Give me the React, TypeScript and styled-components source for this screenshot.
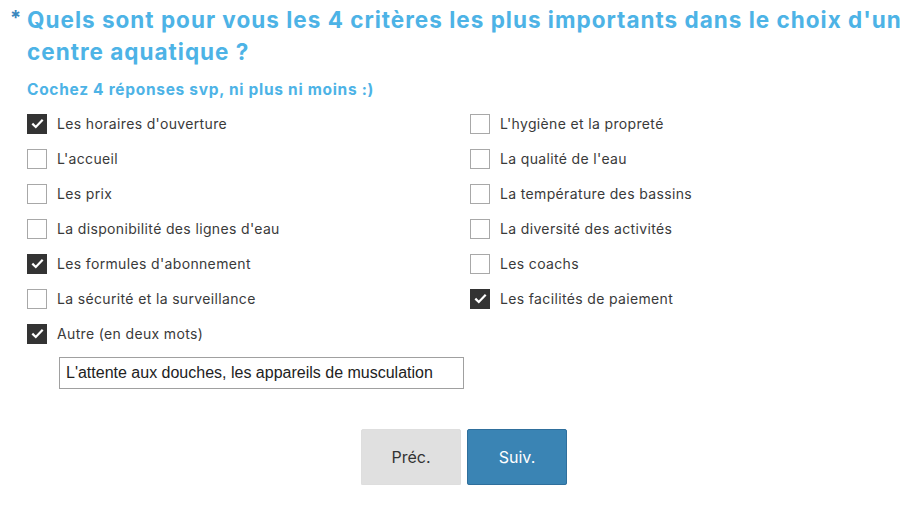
import React from "react";
import styled, { createGlobalStyle } from "styled-components";

const GlobalStyle = createGlobalStyle`
  body {
    margin: 0;
    background: #ffffff;
    font-family: "Inter", "Open Sans", sans-serif;
  }
`;

const left = [
  { label: "Les horaires d'ouverture", checked: true },
  { label: "L'accueil", checked: false },
  { label: "Les prix", checked: false },
  { label: "La disponibilité des lignes d'eau", checked: false },
  { label: "Les formules d'abonnement", checked: true },
  { label: "La sécurité et la surveillance", checked: false },
  { label: "Autre (en deux mots)", checked: true },
];

const right = [
  { label: "L'hygiène et la propreté", checked: false },
  { label: "La qualité de l'eau", checked: false },
  { label: "La température des bassins", checked: false },
  { label: "La diversité des activités", checked: false },
  { label: "Les coachs", checked: false },
  { label: "Les facilités de paiement", checked: true },
];

const App: React.FC = () => {
  return (
    <>
      <GlobalStyle />
      <Page>
        <TitleRow>
          <Star>*</Star>
          <Title>Quels sont pour vous les 4 critères les plus importants dans le choix d'un centre aquatique ?</Title>
        </TitleRow>
        <Hint>Cochez 4 réponses svp, ni plus ni moins :)</Hint>
        <Options>
          {[...left, ...right].map((o) => (
            <Option key={o.label}>
              <Box checked={o.checked}>
                {o.checked && (
                  <svg width="13" height="11" viewBox="0 0 13 11">
                    <path d="M1.3 5.6 L4.8 9 L11.7 1.8" fill="none" stroke="#fff" strokeWidth="2.2" />
                  </svg>
                )}
              </Box>
              <Label>{o.label}</Label>
            </Option>
          ))}
        </Options>
        <OtherInput defaultValue="L'attente aux douches, les appareils de musculation" />
        <Nav>
          <NavButton>Préc.</NavButton>
          <NavButton primary>Suiv.</NavButton>
        </Nav>
      </Page>
    </>
  );
};

const Page = styled.div`
  padding: 4px 0 0 10px;
`;

const TitleRow = styled.div`
  display: flex;
  align-items: flex-start;
`;

const Star = styled.span`
  width: 17px;
  color: #3b87bd;
  font-size: 20px;
  font-weight: 700;
  line-height: 28px;
`;

const Title = styled.h2`
  margin: 0;
  width: 890px;
  color: #4db3e6;
  font-size: 22.5px;
  font-weight: 700;
  line-height: 32px;
  letter-spacing: 1px;
`;

const Hint = styled.div`
  margin: 12px 0 0 17px;
  color: #4db3e6;
  font-size: 15.5px;
  font-weight: 700;
  line-height: 20px;
  letter-spacing: 0.7px;
`;

const Options = styled.div`
  margin: 6px 0 0 17px;
  display: grid;
  grid-template-columns: 443px 1fr;
  grid-template-rows: repeat(7, 35px);
  grid-auto-flow: column;
`;

const Option = styled.label`
  display: flex;
  align-items: center;
  gap: 10px;
`;

const Box = styled.span<{ checked: boolean }>`
  box-sizing: border-box;
  width: 20px;
  height: 20px;
  display: flex;
  align-items: center;
  justify-content: center;
  background: ${(p) => (p.checked ? "#333333" : "#ffffff")};
  border: 1px solid ${(p) => (p.checked ? "#333333" : "#a8a8a8")};
`;

const Label = styled.span`
  color: #3a3a3a;
  font-size: 14px;
  letter-spacing: 0.35px;
`;

const OtherInput = styled.input`
  box-sizing: border-box;
  display: block;
  margin: 6px 0 0 49px;
  width: 405px;
  height: 32px;
  padding: 0 6px;
  border: 1px solid #a0a0a0;
  border-radius: 0;
  font-family: "Liberation Sans", Arial, sans-serif;
  font-size: 16px;
  color: #222222;
  outline: none;
`;

const Nav = styled.div`
  margin-top: 40px;
  display: flex;
  justify-content: center;
  gap: 6px;
  padding-right: 6px;
`;

const NavButton = styled.button<{ primary?: boolean }>`
  box-sizing: border-box;
  width: 100px;
  height: 56px;
  border: 1px solid ${(p) => (p.primary ? "#2f6f9c" : "#dedede")};
  border-radius: 2px;
  background: ${(p) => (p.primary ? "#3a84b4" : "#e0e0e0")};
  color: ${(p) => (p.primary ? "#ffffff" : "#333333")};
  box-shadow: 0 2px 0 #ececec;
  font-family: "Inter", "Open Sans", sans-serif;
  font-size: 16px;
`;

export default App;
